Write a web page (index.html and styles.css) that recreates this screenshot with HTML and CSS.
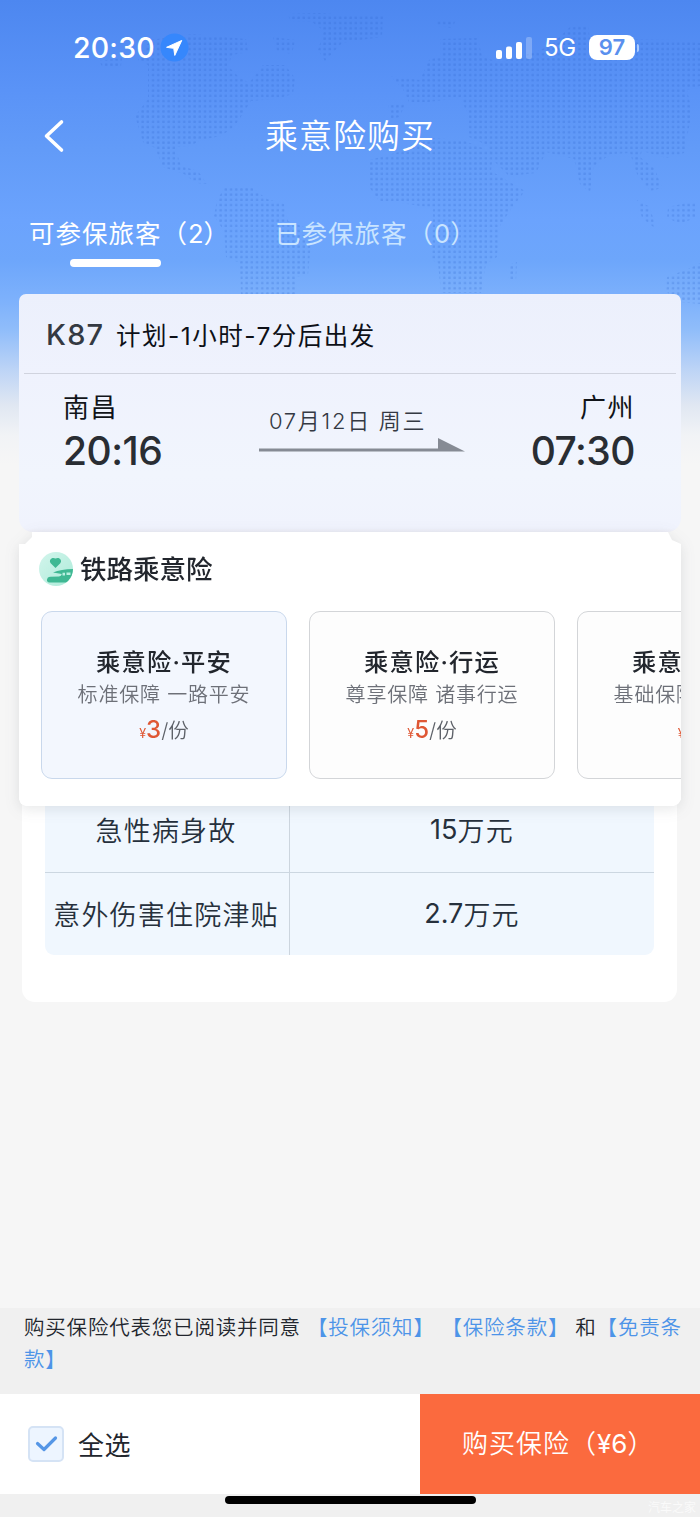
FILE: index.html
```html
<!DOCTYPE html>
<html lang="zh-CN">
<head>
<meta charset="utf-8">
<title>乘意险购买</title>
<link rel="stylesheet" href="styles.css">
</head>
<body>
<div class="screen">
  <svg class="map" width="700" height="310" viewBox="0 0 700 310" aria-hidden="true">
    <defs><pattern id="dots" width="5.2" height="5.2" patternUnits="userSpaceOnUse"><rect x="1" y="1" width="2.5" height="2.5" rx=".7" fill="#2c63cc"/></pattern></defs>
    <g fill="url(#dots)">
      <path d="M150 40L192 34 246 39 248 52 232 55 228 66 238 76 249 83 263 65 285 65 295 78 293 94 276 99 251 101 235 126 221 136 201 140 190 146 175 147 181 166 198 171 207 184 196 183 184 174 163 167 155 148 143 142 135 116 148 99 148 65 138 60Z"/>
      <path d="M99 61L122 58 121 66 103 68ZM273 37L295 40 292 54 277 51ZM288 14L318 13 350 15 383 14 382 37 360 40 342 43 325 61 318 50 324 31 312 22 290 21Z"/>
      <path d="M225 187L251 187 267 199 284 204 288 221 312 230 308 275 296 277 295 294 241 294 240 263 226 257 224 231 214 216 217 200Z"/>
      <path d="M370 160L402 151 431 138 462 140 493 152 491 171 525 191 511 209 500 226 497 257 486 264 481 293 441 293 438 263 432 260 433 208 401 203 380 202 369 187Z"/>
      <path d="M390 76L420 80 429 60 441 56 440 39 478 38 482 57 500 62 520 57 550 46 570 27 588 25 590 39 678 40 700 43 700 86 687 90 692 112 684 153 666 158 642 151 640 157 655 169 662 188 650 191 637 174 630 153 611 154 594 166 590 192 580 184 574 159 546 152 536 173 509 176 494 161 487 145 469 137 469 116 460 98 428 102 409 102 403 89Z"/>
      <path d="M438 20L456 20 452 28 436 26ZM388 105L405 103 400 117 390 119ZM637 200L650 207 656 229 642 218ZM668 207L695 201 696 217 681 224 667 218ZM667 277L688 269 700 263 700 304 678 302 666 291ZM508 265L517 262 516 281 508 280Z"/>
    </g>
  </svg>

  <header class="status">
    <span class="clock">20:30</span>
    <svg class="location" width="30" height="30" viewBox="0 0 30 30"><circle cx="15" cy="15" r="14.5" fill="#3687fc"/><path d="M22.5 7.7L6.8 14.8l7.4 1.1 1.1 7.3z" fill="#fff" stroke="#fff" stroke-width="1" stroke-linejoin="round"/></svg>
    <svg class="signal" width="36" height="22" viewBox="0 0 36 22" fill="#fff"><rect y="13" width="6" height="9" rx="2"/><rect x="10" y="9.500" width="6" height="12.500" rx="2"/><rect x="20" y="5" width="6" height="17" rx="2"/><rect x="30" y="0" width="6" height="22" rx="2" opacity=".25"/></svg>
    <span class="network">5G</span>
    <span class="battery">97</span>
    <i class="battery-tip"></i>
  </header>

  <nav class="titlebar">
    <svg class="back" width="22" height="34" viewBox="0 0 22 34"><path d="M18.5 3L3.5 17l15 14" fill="none" stroke="#fff" stroke-width="3.6" stroke-linecap="round" stroke-linejoin="round"/></svg>
    <h1>乘意险购买</h1>
  </nav>

  <div class="tabs">
    <div class="tab active">可参保旅客<span class="cjk">（</span><span class="digits">2</span><span class="cjk">）</span></div>
    <div class="tab">已参保旅客<span class="cjk">（</span><span class="digits">0</span><span class="cjk">）</span></div>
  </div>

  <section class="ticket">
    <div class="ticket-head"><span class="train">K87</span><span class="plan">计划-1小时-7分后出发</span></div>
    <div class="route">
      <div class="stop"><div class="city">南昌</div><div class="time">20:16</div></div>
      <div class="travel">
        <div class="date">07月12日 周三</div>
        <svg width="206" height="15" viewBox="0 0 206 15"><path d="M0 10.500h179V0L206 13.500H0z" fill="#868b94"/></svg>
      </div>
      <div class="stop end"><div class="city">广州</div><div class="time">07:30</div></div>
    </div>
  </section>

  <section class="sheet-wrap">
    <div class="sheet">
      <div class="sheet-title">
        <svg width="34" height="34" viewBox="0 0 34 34">
          <defs><linearGradient id="mint" x2="1" y2="1"><stop stop-color="#d2f5ec"/><stop offset="1" stop-color="#aeebd9"/></linearGradient><clipPath id="disc"><circle cx="17" cy="17" r="17"/></clipPath></defs>
          <g clip-path="url(#disc)"><rect width="34" height="34" fill="url(#mint)"/><path d="M16.500 16l-4.800-4.700c-2.400-3.300 1.400-6.800 4.800-4.700 3.400-2.100 7.200 1.400 4.800 4.700z" fill="#3fb893"/><path d="M14 20.500q8-3.500 20-3.500v9.500q-1 4-5 4H10.500q-3-.5-2.500-3 .3-2.500 3-2.700l9-.3q2.500-.3 2.800-2.500z" fill="#3fb893"/><path d="M23.500 20.800h2.500v2.700h-2.500zM27.500 20.500h4v2.500h-4z" fill="#baf0e1"/></g>
        </svg>
        <h2>铁路乘意险</h2>
      </div>
      <div class="plans">
        <article class="card selected"><h3>乘意险·平安</h3><p>标准保障 一路平安</p><div class="price"><small>¥</small><b>3</b>/份</div></article>
        <article class="card"><h3>乘意险·行运</h3><p>尊享保障 诸事行运</p><div class="price"><small>¥</small><b>5</b>/份</div></article>
        <article class="card"><h3>乘意险·安心</h3><p>基础保障 安心出行</p><div class="price"><small>¥</small><b>1</b>/份</div></article>
      </div>
    </div>
  </section>

  <section class="coverage">
    <div class="grid">
      <div class="cell label">急性病身故</div><div class="cell"><span class="digits">15</span>万元</div>
      <div class="cell label">意外伤害住院津贴</div><div class="cell"><span class="digits">2.7</span>万元</div>
    </div>
  </section>

  <div class="terms">购买保险代表您已阅读并同意<a class="first">【投保须知】</a><a class="second">【保险条款】</a><span class="and">和</span><a class="third">【免责条<br>款】</a></div>

  <footer class="buybar">
    <div class="select-all">
      <svg width="36" height="36" viewBox="0 0 36 36"><rect x="1" y="1" width="34" height="34" rx="4" fill="#edf5ff" stroke="#d5e3f5" stroke-width="2"/><path d="M9.500 17.500l6.500 6L27.500 12" fill="none" stroke="#5596e6" stroke-width="3.200" stroke-linecap="round" stroke-linejoin="round"/></svg>
      <span>全选</span>
    </div>
    <div class="buy">购买保险<span class="cjk">（</span><span class="digits">¥6</span><span class="cjk">）</span></div>
  </footer>
  <div class="home"><i class="home-bar"></i><span class="mark">汽车之家</span></div>
</div>
</body>
</html>
```
FILE: styles.css
```css
* { box-sizing: border-box; }
body { margin: 0; font-family: Inter, "Noto Sans CJK SC", sans-serif; color: #22262d; }
h1, h2, h3, p { margin: 0; }
.cjk { font-family: "Noto Sans CJK SC", sans-serif; line-height: 1; }
.digits { letter-spacing: 0; font-weight: 400; }
.screen {
  position: relative; width: 700px; height: 1517px; overflow: hidden;
  display: flex; flex-direction: column;
  background: linear-gradient(#4d87f0 0, #5a93f7 90px, #629bf8 150px, #6ba3fd 220px, #6da6fb 260px, #7db1fc 300px, #90bdfa 330px, #bdd4f6 370px, #e0e7f2 405px, #f1f3f6 435px, #f6f6f6 465px);
}
.map { position: absolute; left: 0; top: 0; opacity: .24; }
.screen > :not(.map) { position: relative; flex: none; }

.status { height: 95px; padding: 0 61px 0 73px; display: flex; align-items: center; color: #fff; }
.clock { width: 87px; font-size: 28.500px; font-weight: 500; letter-spacing: .2px; }
.location { width: 29px; height: 29px; }
.signal { margin-left: 307px; }
.network { margin-left: 12px; width: 45px; font-size: 24px; letter-spacing: -.4px; }
.battery { width: 46px; height: 25px; border-radius: 8px; background: #fff; color: #5a90ee; text-align: center; font-size: 22px; line-height: 25px; font-weight: 600; }
.battery-tip { width: 2px; height: 8px; margin-left: 2px; border-radius: 0 3px 3px 0; background: #a9caff; }

.titlebar { height: 81px; display: flex; align-items: center; }
.back { margin-left: 43px; }
.titlebar h1 { margin: 1px 0 0 200px; color: #fff; font-size: 33px; letter-spacing: 1px; font-weight: 350; line-height: 40px; }
.tabs { height: 118px; padding: 39px 0 0 29px; display: flex; color: #fff; }
.tab { width: 246px; height: 52px; font-size: 25.500px; letter-spacing: 1px; line-height: 38px; white-space: nowrap; color: #c9e4ff; }
.tab.active { color: #fff; }
.tab.active::after { content: ""; display: block; width: 91px; height: 8px; margin: 6px 0 0 41px; border-radius: 4px; background: #fff; }

.ticket { margin: 0 19px; height: 238px; border-radius: 7px 7px 14px 14px; background: linear-gradient(#ecf0fc, #eff2fd 80px, #f1f5fd 180px, #f0f3fd 234px, #ededf6); }
.ticket-head { height: 80px; margin: 0 5px; padding: 1px 0 0 22px; display: flex; align-items: center; border-bottom: 1px solid #d0d3de; }
.train { width: 70px; font-size: 29px; font-weight: 500; letter-spacing: 1.200px; color: #343942; }
.plan { font-size: 24.500px; letter-spacing: 1.500px; color: #0d1017; }
.route { padding: 15px 46px 0 44px; display: flex; }
.stop { width: 196px; }
.city { font-size: 26px; letter-spacing: 1.500px; line-height: 38px; color: #111419; }
.time { font-size: 39px; font-weight: 450; line-height: 48px; letter-spacing: -.5px; color: #292d33; }
.end { flex: 1; text-align: right; }
.travel { width: 206px; padding: 12px 0 0; }
.date { height: 37px; padding-left: 10px; font-size: 22px; line-height: 40px; letter-spacing: 1.700px; font-weight: 350; color: #343943; white-space: nowrap; }
.travel svg { display: block; }

.sheet-wrap { z-index: 2; height: 274px; margin: 0 19px; filter: drop-shadow(0 3px 7px rgba(60, 70, 80, .13)); }
.sheet { width: 662px; height: 274px; padding: 20px 0 0 20px; border-radius: 0 0 7px 7px; background: #fff; overflow: hidden; clip-path: polygon(13px 0, 649px 0, 653px 8px, 662px 12px, 662px 268px, 659px 272px, 655px 274px, 6px 274px, 2px 272px, 0 268px, 0 12px, 6px 12px, 13px 5px); }
.sheet-title { height: 34px; display: flex; align-items: center; gap: 7px; }
.sheet-title h2 { font-size: 26.500px; line-height: 34px; font-weight: 500; }
.plans { margin: 25px 0 0 2px; display: flex; gap: 22px; }
.card { flex: none; width: 246px; height: 168px; padding: 32px 0 0; border: 1px solid #d3d5d8; border-radius: 11px; background: #fdfdfd; text-align: center; }
.card.selected { background: #f3f7fe; border-color: #c9d8ec; }
.card h3 { font-size: 24.300px; letter-spacing: 1.200px; line-height: 36px; font-weight: 500; }
.card p { font-size: 20px; letter-spacing: .8px; line-height: 31px; color: #6d7078; font-weight: 350; white-space: nowrap; }
.price { display: flex; justify-content: center; align-items: baseline; font-size: 20.500px; line-height: 38px; font-weight: 350; color: #5e6269; }
.price small { font-size: 12.500px; font-weight: 400; color: #df5734; }
.price b { font-size: 24px; font-weight: 500; color: #df5734; }

.coverage { z-index: 1; margin: -6px 23px 0 22px; height: 202px; padding: 0 23px; border-radius: 0 0 13px 13px; background: #fff; }
.grid { height: 155px; display: grid; grid-template-columns: 245px 1fr; grid-template-rows: 73px 82px; overflow: hidden; border-radius: 0 0 9px 9px; background: #f0f7fe; }
.cell { display: flex; justify-content: center; align-items: center; padding-bottom: 1px; color: #26303c; font-size: 27px; font-weight: 350; letter-spacing: 1.200px; white-space: nowrap; }
.cell.label { padding-right: 2px; border-right: 1px solid #ccd5de; }
.cell:nth-child(-n+2) { padding-bottom: 13px; border-bottom: 1px solid #ccd7e1; }

.terms { margin-top: auto; height: 86px; padding: 4px 0 0 24px; background: #f0f0f0; font-size: 20.500px; line-height: 32px; letter-spacing: .8px; white-space: nowrap; font-weight: 350; }
.terms a { color: #4d94e8; }
.terms .first { margin-left: 6px; }
.terms .second { margin-left: 17px; }
.terms .and { margin-left: 6px; }
.buybar { height: 100px; display: flex; background: #fff; }
.select-all { width: 420px; padding-left: 28px; display: flex; align-items: center; gap: 14px; font-size: 26px; letter-spacing: .6px; }
.select-all span { margin-top: -2px; }
.buy { width: 280px; padding-left: 42px; background: #fb6a3e; color: #fff; font-size: 26px; letter-spacing: 1px; line-height: 100px; height: 100px; white-space: nowrap; font-weight: 350; }
.home { height: 23px; display: flex; background: #f0f0f0; }
.home-bar { width: 251px; height: 8px; margin: 2px 0 0 225px; border-radius: 4px; background: #000; }
.mark { margin: 5px 0 0 172px; font-size: 12px; line-height: 17px; white-space: nowrap; color: #fafafa; }
```
